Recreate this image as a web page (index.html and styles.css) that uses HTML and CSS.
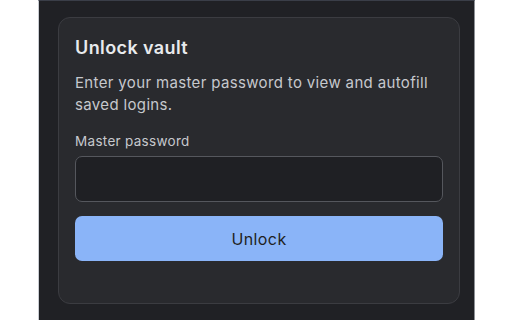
FILE: index.html
```html
<!DOCTYPE html>
<html>
<head>
<meta charset="utf-8">
<link rel="stylesheet" href="styles.css">
</head>
<body>
<div class="frame">
  <div class="popup">
    <div class="card">
      <h1 class="title">Unlock vault</h1>
      <p class="desc">Enter your master password to view and autofill saved logins.</p>
      <label class="label" for="pw">Master password</label>
      <input class="input" id="pw" type="password">
      <button class="btn">Unlock</button>
    </div>
  </div>
</div>
</body>
</html>
```
FILE: styles.css
```css
html, body {
  margin: 0;
  padding: 0;
  background: #ffffff;
  height: 100%;
}
.frame {
  height: 320px;
  display: flex;
  padding-left: 38px;
  padding-right: 37px;
}
.popup {
  flex: 1;
  background: #202125;
  border-left: 1px solid #c9ccd2;
  border-right: 1px solid #8e9196;
  border-top: 1px solid #3a3e48;
  padding: 16px 14px 16px 19px;
  box-sizing: border-box;
  font-family: Inter, "Noto Sans", sans-serif;
}
.card {
  background: #292a2e;
  border: 1px solid #3b3c41;
  border-radius: 12px;
  height: 287px;
  box-sizing: border-box;
  padding: 17px 16px 0 16px;
  display: flex;
  flex-direction: column;
}
.title {
  margin: 0;
  font-size: 18px;
  font-weight: 600;
  letter-spacing: 0.4px;
  color: #e8eaed;
  line-height: 26px;
}
.desc {
  margin: 11px 0 0 0;
  font-size: 15px;
  letter-spacing: 0.35px;
  color: #c6c8cd;
  line-height: 22px;
}
.label {
  margin-top: 16px;
  font-size: 13.5px;
  letter-spacing: 0.3px;
  color: #c6c8cd;
  line-height: 18px;
}
.input {
  margin-top: 6px;
  height: 46px;
  box-sizing: border-box;
  background: #1f2024;
  border: 1px solid #55575d;
  border-radius: 7px;
  outline: none;
}
.btn {
  margin-top: 14px;
  height: 45px;
  border: none;
  border-radius: 7px;
  background: #8ab4f8;
  color: #1f1f22;
  font-family: Inter, "Noto Sans", sans-serif;
  font-size: 16px;
  font-weight: 400;
  letter-spacing: 0.4px;
}
```
